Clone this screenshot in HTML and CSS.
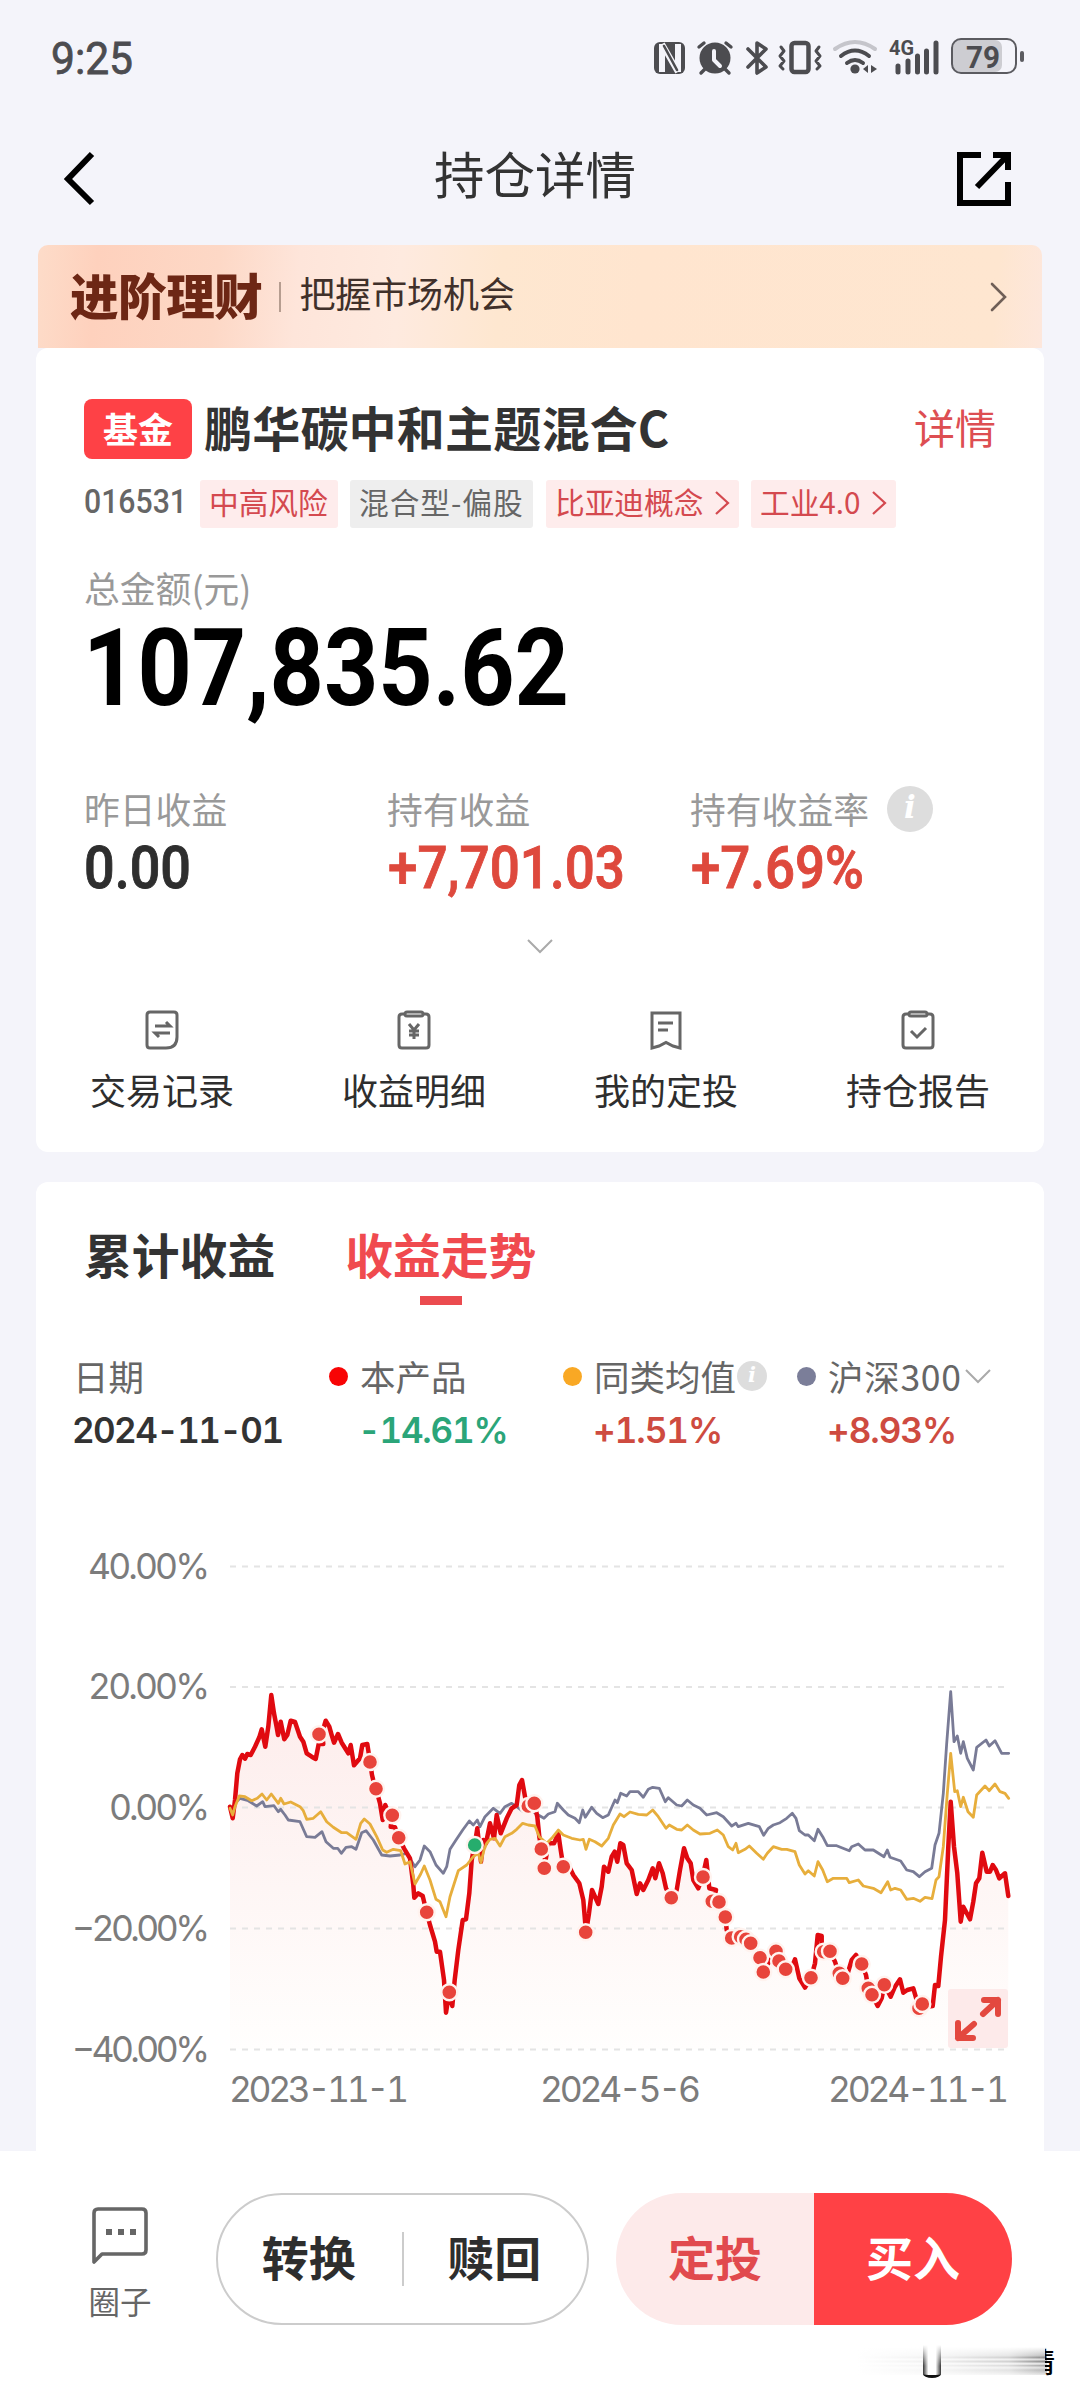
FILE: index.html
```html
<!DOCTYPE html>
<html lang="zh-CN">
<head>
<meta charset="utf-8">
<title>持仓详情</title>
<link rel="stylesheet" href="styles.css">
</head>
<body>
<header class="status">
  <svg class="clock" width="84" height="52"><text x="0" y="43" textLength="82" lengthAdjust="spacingAndGlyphs">9:25</text></svg>
  <svg class="status-icons" width="380" height="50" viewBox="650 30 380 50">
    <g fill="none" stroke="#4c4c50" stroke-width="3.4" stroke-linecap="round" stroke-linejoin="round">
      <rect x="654" y="42" width="31" height="32" rx="6" fill="#4c4c50" stroke="none"/>
      <path d="M662 44V72M678 44V72M662 44L678 72" stroke="#f4f4fa" stroke-width="6" stroke-linecap="butt"/>
      <path d="M664 46L677 70" stroke-width="2.6"/>
      <circle cx="715" cy="58" r="15.5" fill="#4c4c50" stroke="none"/>
      <path d="M699 47l5-4M731 47l-5-4M705 69l-4 4M725 69l4 4"/>
      <path d="M714 51v9l6 6" stroke="#f4f4fa" stroke-width="4"/>
      <path d="M748 49l18 18-9 6V43l9 6-18 18" stroke-width="3.6"/>
      <rect x="791.500" y="43" width="17" height="29" rx="3" stroke-width="4.500"/>
      <path d="M781 47l3 4-4 5 4 5-4 5 3 3M819 47l-3 4 4 5-4 5 4 5-3 3" stroke-width="3"/>
      <path d="M835 49q20-14 40 0" stroke="#c5c5cb" stroke-width="4"/>
      <path d="M841 56q14-11 28 0M847 63q8-6 16 0" stroke-width="4"/>
      <path d="M898 66v6M908 61v11M917.500 56v16M926.500 51v21M936 43v29" stroke-width="5"/>
    </g>
    <circle cx="855" cy="69" r="4.600" fill="#4c4c50"/>
    <path d="M868 65v8l-5-4zM871 65l6 4-6 4z" fill="#4c4c50"/>
    <text class="net" x="889" y="55" textLength="25" lengthAdjust="spacingAndGlyphs">4G</text>
    <rect x="953" y="40" width="49" height="32" rx="7" fill="#cdcdd2"/>
    <rect x="952" y="39" width="64" height="34" rx="9" fill="none" stroke="#5b5b60" stroke-width="2"/>
    <rect x="1020" y="51" width="4" height="11" rx="2" fill="#5b5b60"/>
    <text class="bat" x="966" y="68" textLength="34" lengthAdjust="spacingAndGlyphs">79</text>
  </svg>
</header>
<nav class="topbar">
  <svg width="32" height="56" viewBox="0 0 32 56"><path d="M28 3L4 28L28 52" fill="none" stroke="#000" stroke-width="6"/></svg>
  <h1>持仓详情</h1>
  <svg width="54" height="54" viewBox="0 0 54 54" fill="none" stroke="#000" stroke-width="6"><path d="M24 3H3V51H51V30M36 3H51V18M51 3L20 35"/></svg>
</nav>
<main>
  <section class="banner">
    <strong>进阶理财</strong><i></i><span>把握市场机会</span>
    <svg width="18" height="32" viewBox="0 0 18 32"><path d="M2 3L15 16L2 29" fill="none" stroke="#6f5f57" stroke-width="2.600" stroke-linecap="round"/></svg>
  </section>
  <section class="card holding">
    <div class="name-row"><b class="badge">基金</b><h2>鹏华碳中和主题混合C</h2><a>详情</a></div>
    <div class="tag-row">
      <svg class="code" width="104" height="38"><text x="0" y="27" textLength="103" lengthAdjust="spacingAndGlyphs">016531</text></svg>
      <span class="tag t1">中高风险</span><span class="tag t2">混合型-偏股</span>
      <span class="tag t3">比亚迪概念<svg width="14" height="24" viewBox="0 0 14 24"><path d="M1 1L13 12L1 23"/></svg></span>
      <span class="tag t4">工业4.0<svg width="14" height="24" viewBox="0 0 14 24"><path d="M1 1L13 12L1 23"/></svg></span>
    </div>
    <div class="total-label">总金额(元)</div>
    <svg class="total" width="500" height="100"><text x="0" y="83" textLength="486" lengthAdjust="spacingAndGlyphs">107,835.62</text></svg>
    <div class="stats">
      <div><p>昨日收益</p><svg width="240" height="62"><text class="dark" x="0" y="48" textLength="107" lengthAdjust="spacingAndGlyphs">0.00</text></svg></div>
      <div><p>持有收益</p><svg width="240" height="62"><text x="1" y="48" textLength="237" lengthAdjust="spacingAndGlyphs">+7,701.03</text></svg></div>
      <div><p>持有收益率<em class="info">i</em></p><svg width="240" height="62"><text x="1" y="48" textLength="173" lengthAdjust="spacingAndGlyphs">+7.69%</text></svg></div>
    </div>
    <div class="more"><svg width="28" height="18" viewBox="0 0 28 18"><path d="M2 3L14 15L26 3" fill="none" stroke="#aaa" stroke-width="2"/></svg></div>
    <div class="actions">
      <div><svg viewBox="0 0 40 44"><path d="M7 4H31Q34 4 34 7V29Q34 40 23 40H7Q4 40 4 37V7Q4 4 7 4Z"/><path d="M12 18H27L23 14M27 25H12L16 29"/></svg>交易记录</div>
      <div><svg viewBox="0 0 40 44"><path d="M10 6H7Q4 6 4 9V37Q4 40 7 40H31Q34 40 34 37V9Q34 6 31 6H28"/><rect x="10" y="4" width="18" height="4" rx="2"/><path d="M14 16L19 22L24 16M19 22V31M14 23H24M14 27H24"/></svg>收益明细</div>
      <div><svg viewBox="0 0 40 44"><path d="M5 5H33V40L26 38L19 34.500L12 38L5 40Z"/><path d="M11 15H26M11 22H21"/></svg>我的定投</div>
      <div><svg viewBox="0 0 40 44"><path d="M10 6H7Q4 6 4 9V37Q4 40 7 40H31Q34 40 34 37V9Q34 6 31 6H28"/><rect x="10" y="4" width="18" height="4" rx="2"/><path d="M12 23L18 29L27 20"/></svg>持仓报告</div>
    </div>
  </section>
  <section class="card trend">
    <div class="tabs"><b>累计收益</b><b class="active">收益走势</b></div>
    <div class="legend">
      <div class="c0"><p>日期</p><strong>2024-11-01</strong></div>
      <div class="c1"><p><i class="dot red"></i>本产品</p><strong class="down">-14.61%</strong></div>
      <div class="c2"><p><i class="dot gold"></i>同类均值<em class="info small">i</em></p><strong class="up">+1.51%</strong></div>
      <div class="c3"><p><i class="dot slate"></i>沪深300<svg width="28" height="18" viewBox="0 0 28 18"><path d="M2 3L14 15L26 3" fill="none" stroke="#aaa" stroke-width="2"/></svg></p><strong class="up">+8.93%</strong></div>
    </div>
    <svg class="chart" width="1008" height="576" viewBox="36 1540 1008 576">
      <defs><linearGradient id="fade" gradientUnits="userSpaceOnUse" x1="0" y1="1690" x2="0" y2="2049"><stop offset="0" stop-color="#fdeceb"/><stop offset=".55" stop-color="#fef6f5"/><stop offset="1" stop-color="#fffefd"/></linearGradient></defs>
      <path id="area" fill="url(#fade)"/>
      <g class="grid"><path d="M230 1566.500H1008M230 1687H1008M230 1807.500H1008M230 1928.500H1008M230 2049.500H1008"/></g>
      <path id="slate" class="line" stroke="#797b96" stroke-width="2.800"/>
      <path id="red" class="line" stroke="#e00a10" stroke-width="4.500"/>
      <path id="gold" class="line" stroke="#e7ae3c" stroke-width="2.800"/>
      <g id="marks"></g>
      <rect x="948" y="1989" width="60" height="59" rx="3" fill="#fdeaea"/>
      <path d="M984 2000H998V2014M998 2000L983 2014M958 2023V2038H973M958 2038L974 2024" fill="none" stroke="#e3483f" stroke-width="6" stroke-linejoin="round" stroke-linecap="round"/>
      <g class="axis">
        <text x="88" y="1579" textLength="122">40.00%</text><text x="88" y="1699" textLength="122">20.00%</text><text x="109" y="1820" textLength="101">0.00%</text><text x="72" y="1941" textLength="138">−20.00%</text><text x="72" y="2062" textLength="138">−40.00%</text>
        <text x="229" y="2102" textLength="180">2023-11-1</text><text x="540" y="2102" textLength="161">2024-5-6</text><text x="828" y="2102" textLength="181">2024-11-1</text>
      </g>
    </svg>
  </section>
</main>
<footer class="bottom">
  <div class="circle"><svg width="58" height="58" viewBox="0 0 58 58" fill="none" stroke="#666" stroke-width="3.600" stroke-linejoin="round"><path d="M3 56V7Q3 3 7 3H51Q55 3 55 7V44Q55 48 51 48H11Z"/><path d="M15 26H21M27 26H33M39 26H45" stroke-width="6"/></svg>圈子</div>
  <div class="pill outline"><span>转换</span><i></i><span>赎回</span></div>
  <div class="pill solid"><span>定投</span><span class="buy">买入</span></div>
  <div class="smear"><span class="streaks"></span><span class="hook"></span><span class="cut">情</span></div>
</footer>
<script src="chart.js"></script>
</body>
</html>
```
FILE: styles.css
```css
*{box-sizing:border-box}
body{margin:0;width:1080px;height:2400px;overflow:hidden;background:#f4f4fa;font-family:"Noto Sans CJK SC",sans-serif;color:#333}
h1,h2,p{margin:0;font-weight:400}
svg{display:block;flex:none;overflow:visible}
i,em{font-style:normal}
.status{height:110px;padding:30px 50px 0 51px;display:flex;justify-content:space-between}
.clock{font:400 45px Roboto,sans-serif;fill:#4c4c50;stroke:#4c4c50;stroke-width:.8px;margin-top:1px}
.net{font:700 21px Roboto,sans-serif;fill:#4c4c50}
.bat{font:700 31px Roboto,sans-serif;fill:#4c4c50}
.topbar{height:135px;padding:2px 69px 0 64px;display:flex;align-items:center;justify-content:space-between}
.topbar h1{font-size:50.500px;line-height:60px;margin-left:17px;margin-bottom:13px}
main{padding:0 36px}
.banner{height:103px;margin:0 2px;padding:0 34px 0 32px;border-radius:10px 10px 0 0;display:flex;align-items:center;background:linear-gradient(95deg,#fddcc9 0,#fed1bd 6%,#fdd8c6 18%,#fee5da 26%,#feeadf 36%,#fee7d0 46%,#ffe5cf 60%,#fee6d0 95%,#fde7dc 100%)}
.banner strong{font-size:48.500px;font-weight:900;letter-spacing:-.4px;color:#6d2715;line-height:60px;margin-bottom:6px;white-space:nowrap}
.banner i{width:2px;height:30px;background:#b69d90;margin:0 18px 0 17px}
.banner span{font-size:36px;line-height:48px;margin-bottom:9px;letter-spacing:-.1px;flex:1;color:#40302a}
.card{background:#fff;border-radius:12px}
.holding{height:804px;padding:51px 48px 0}
.name-row{display:flex;align-items:center;height:60px}
.badge{width:108px;height:60px;border-radius:8px;background:#fe4146;color:#fff;font-size:35px;line-height:58px;text-align:center}
.name-row h2{font-size:48px;font-weight:700;line-height:60px;margin:-6px 0 0 12px;letter-spacing:.2px;flex:1;white-space:nowrap}
.name-row a{color:#dd4e52;font-size:41px;line-height:60px;margin:-6px 0 0}
.tag-row{display:flex;height:48px;margin-top:21px}
.code{margin:6px 12px 0 0;font:500 34px Roboto,sans-serif;fill:#666}
.tag{height:48px;padding:0 10px 0 9px;font-size:29.700px;line-height:44px;padding-bottom:5px;border-radius:3px;background:#feecec;color:#d4494f;display:flex;align-items:center;justify-content:space-between;white-space:nowrap}
.tag svg{fill:none;stroke:#d4494f;stroke-width:2.200;margin-top:3px}
.t1{width:138px;margin-right:12px}.t2{width:183px;margin-right:13px;background:#eee;color:#666;letter-spacing:1px}.t3{width:193px;margin-right:12px}.t4{width:145px}
.total-label{font-size:35.800px;line-height:46px;margin-top:36px;color:#999}
.total{height:100px;margin:12px 0 0 -1px;font:700 107px Roboto,sans-serif;fill:#000}
.stats{display:grid;grid-template-columns:303px 303px 1fr;margin-top:64px}
.stats p{font-size:35.800px;line-height:44px;height:46px;padding-bottom:2px;color:#999;display:flex;align-items:center;white-space:nowrap}
.stats svg{margin-top:8px;font:500 60px Roboto,sans-serif;fill:#de493d;stroke:#de493d;stroke-width:.9px}
.stats .dark{fill:#2e2e2e;stroke:#2e2e2e}
.info{flex:none;width:46px;height:46px;border-radius:50%;background:#ddd;color:#fff;font:italic 700 31px/43px "DejaVu Serif",serif;text-align:center;margin:2px 0 0 18px}
.info.small{width:30px;height:30px;font-size:21px;line-height:28px;margin:0 0 0 1px}
.more{display:flex;justify-content:center;margin-top:35px}
.actions{display:grid;grid-template-columns:repeat(4,252px);margin:53px -48px 0}
.actions div{display:flex;flex-direction:column;align-items:center;font-size:36px;line-height:46px;color:#2e2e2e}
.actions svg{width:40px;height:44px;margin:0 0 14px 2px;fill:none;stroke:#666;stroke-width:3}
.trend{height:969px;margin-top:30px;padding-top:42px;border-radius:12px 12px 0 0}
.tabs{display:flex;gap:70px;padding-left:48px;height:82px;font-size:47.800px;line-height:60px}
.active{color:#f04a4f;display:flex;flex-direction:column;align-items:center}
.active::after{content:"";width:42px;height:9px;background:#eb4b4f;margin-top:12px}
.legend{display:grid;grid-template-columns:256px 234px 234px 1fr;padding:44px 0 0 37px}
.legend p{display:flex;align-items:center;font-size:35.500px;line-height:52px;height:52px;color:#666;white-space:nowrap}
.dot{width:19px;height:19px;border-radius:50%;margin:0 12px 0 0}
.c3 p{letter-spacing:.7px}
.c3 svg{margin-left:2px}
.red{background:#f80405}.gold{background:#f9a824}.slate{background:#7b7e99}
.legend strong{display:block;font:600 35px/50px Inter,sans-serif;font-feature-settings:"tnum";letter-spacing:-1px;margin:3px 0 0 30px;white-space:nowrap}
.legend .c0 strong{margin-left:-1px;letter-spacing:-1.600px}
.legend .c1 strong{margin-left:29px;letter-spacing:-1.200px}
.down{color:#2ba579}.up{color:#ce4b40}
.chart{margin-top:85px}
.grid path{fill:none;stroke:#e4e4e4;stroke-width:2;stroke-dasharray:6 6}
.line{fill:none;stroke-linejoin:round;stroke-linecap:round}
.axis{font:400 35.500px Inter,sans-serif;font-feature-settings:"tnum";fill:#7c7c7c}
.bottom{height:249px;background:#fff;display:flex;padding:42px 68px 0 88px;position:relative}
.circle{width:62px;margin:13px 65px 0 1px;display:flex;flex-direction:column;align-items:center;font-size:31.500px;line-height:42px;color:#666;white-space:nowrap}
.circle svg{margin-bottom:15px}
.pill{height:132px;border-radius:66px;display:flex;align-items:center;font-size:47px;font-weight:700}
.pill span{flex:1;text-align:center;line-height:125px}
.outline{width:373px;border:2px solid #ccc;margin-right:27px;color:#2e2e2e}
.outline span{line-height:122px;height:128px;padding-right:2px}
.outline i{width:2px;height:54px;background:#ccc}
.solid{width:396px;overflow:hidden;background:#fdeaea;color:#e14a4e}
.solid span{height:132px}
.solid .buy{background:#ff4145;color:#fff}
.smear{position:absolute;left:857px;top:194px;width:200px;height:36px}
.smear span{position:absolute}
.streaks{left:0;top:2px;width:190px;height:28px;background:linear-gradient(90deg,#fff 0,#ffffffe0 45%,#ffffffa8 80%,#ffffff20 100%),linear-gradient(#fff,#bbb 30%,#777 38%,#ddd 44%,#777 52%,#eee 60%,#999 66%,#ddd 74%,#aaa 82%,#e5e5e5)}
.hook{left:66px;top:0;width:18px;height:33px;border-radius:0 0 9px 9px/0 0 4px 4px;border-bottom:3px solid #111;background:linear-gradient(#fff,#fff0 70%),linear-gradient(90deg,#333,#fff 30%,#fff 70%,#333)}
.cut{right:2px;top:1px;width:10px;height:32px;overflow:hidden;direction:rtl;font-size:28px;line-height:30px;font-weight:500;color:#000}
```
FILE: chart.js
```js
// Each series is stored as tiles: [originX, originY, points], three units per pixel.
const series = {
  red: [
    [200,1640,"90,500 98,535 105,480 112,400 120,358 127,345 135,356 142,342 152,345 165,320 178,292 185,268 196,320 205,260 214,165 222,220 230,262 234,285 242,245 253,298 262,285 272,242 285,246 300,290 310,305 320,340 335,350 347,357 356,312 370,312 366,280 377,242 388,260 395,285 402,308 414,282 425,308 445,340 452,315 462,376 480,355 487,315 502,312 510,365 516,405 522,430 528,446 540,490 548,540 556,495 566,520 577,526 572,560 585,562 596,593 612,625 630,655 640,735 643,773 655,760 668,768 680,818 690,855 705,905 710,935 720,935 732,1020 738,1118 747,1060 757,1098 764,1020 775,930 788,840 798,838 808,760 815,660 824,615 832,565 843,665 850,600 858,610"],
    [480,1700,"30,370 42,415 50,345 62,400 80,355 95,325 110,315 118,255 126,240 135,290 145,320 163,310 172,350 178,410 184,445 195,475 193,505 205,430 222,430 235,400 242,450 250,500 270,505 280,525 298,550 310,600 318,697 327,640 336,570 355,612 365,560 372,500 385,515 395,470 404,455 412,485 421,430 430,435 440,490 455,510 470,582 480,550 490,570 505,540 518,505 526,535 537,490 548,520 558,565 574,593 590,570 600,510 612,445 622,475 632,490 640,540 655,565 668,530 679,480 688,565 708,570 700,605 717,606 736,650 740,690 755,715 790,705 812,730 840,773 850,816 885,755 895,785 917,806"],
    [740,1660,"150,935 165,898 178,955 195,983 213,953 225,910 233,825 245,828 245,875 270,874 285,905 295,935 308,955 320,950 335,900 348,885 365,912 378,945 385,985 396,1004 413,1038 425,1015 433,974 452,1010 465,980 480,958 490,998 502,990 520,985 530,1020 537,1055 547,1032 560,1040 578,1038 585,975 595,978 603,890 615,780 625,560 632,425 642,560 652,640 662,785 670,740 690,778 700,725 708,670 718,655 727,578 740,635 750,635 758,615 768,630 778,655 795,640 805,708"]
  ],
  gold: [
    [200,1640,"90,505 98,525 105,500 118,468 135,470 155,482 172,475 186,462 200,480 214,462 235,490 242,475 252,492 272,486 300,500 310,512 320,538 340,535 362,515 380,545 400,562 425,578 440,578 468,598 482,550 493,537 510,552 530,590 548,630 560,637 580,628 602,632 615,672 630,665 645,732 662,702 673,678 690,720 708,778 720,785 738,830 750,770 775,692 800,675 820,650 835,640 843,668 852,630"],
    [480,1700,"20,430 30,418 45,415 60,438 75,410 95,400 110,388 128,370 145,375 165,378 178,410 200,430 215,415 235,390 250,405 275,415 300,420 310,418 318,448 328,418 345,425 365,438 385,415 400,375 420,342 432,350 450,336 475,343 500,345 518,330 535,350 558,385 568,375 590,388 605,390 622,375 640,390 660,402 690,400 712,390 730,405 745,440 758,450 768,430 775,458 795,448 808,438 830,460 850,478 862,460 880,440"],
    [740,1660,"125,568 140,568 165,575 178,615 195,642 205,632 223,648 234,605 248,630 262,665 280,655 320,655 328,668 355,660 370,678 400,685 423,698 443,665 452,690 465,685 482,690 500,718 520,715 540,724 555,712 576,716 588,660 597,650 610,560 622,400 632,280 644,395 652,392 662,440 670,412 684,455 700,472 710,405 735,378 748,392 765,372 780,395 795,400 806,415"]
  ],
  slate: [
    [200,1640,"105,490 120,475 145,482 170,498 188,485 195,500 222,497 235,515 242,508 255,525 265,540 300,545 320,590 345,592 366,575 378,605 400,625 413,625 424,640 438,622 455,620 468,628 485,578 498,572 520,600 545,645 570,648 600,645 620,640 645,680 660,660 673,618 690,635 708,675 730,700 740,680 750,628 768,600 788,570 808,543 820,555 832,540 840,560 855,530"],
    [480,1700,"40,325 60,340 75,320 95,310 110,320 130,335 150,330 175,345 192,355 205,342 225,335 232,310 250,330 265,345 285,355 298,368 308,330 316,352 335,322 350,340 368,353 385,345 405,300 412,308 422,280 440,288 450,275 475,275 490,292 505,268 518,262 538,265 556,305 565,293 590,315 605,318 622,300 640,315 660,325 680,345 710,338 730,350 755,378 768,370 775,380 805,370 838,380 851,406 865,385 880,375"],
    [740,1660,"120,488 140,475 157,460 168,475 178,512 195,525 205,525 223,542 234,508 248,530 262,557 290,557 328,572 335,560 355,552 375,570 400,570 432,590 442,570 450,592 482,603 500,630 520,635 538,650 555,635 575,625 585,555 597,520 610,400 620,250 632,95 642,245 652,228 662,280 670,245 682,295 700,330 710,262 738,240 748,258 765,242 785,280 806,280"]
  ]
};
const buys = [
  [200,1640,"357,283 510,366 528,446 577,526 596,593 680,817 748,1057"],
  [480,1700,"145,318 163,310 184,447 193,505 250,500 317,697 574,593 669,531 697,604 717,606 736,651 755,714 782,710 798,718 812,730 840,773 850,816"],
  [740,1660,"108,874 117,903 137,928 213,953 251,875 270,874 298,940 308,955 365,912 385,985 396,1004 433,974 537,1045 547,1032"]
];
const sells = [[200,1640,"824,615"]];
const decode = tiles => tiles.flatMap(([ox, oy, pts]) => pts.split(" ").map(p => {
  const [x, y] = p.split(",").map(Number);
  return [(ox + x / 3).toFixed(1), (oy + y / 3).toFixed(1)];
}));
for (const id in series) {
  const d = "M" + decode(series[id]).map(p => p.join(" ")).join("L");
  document.getElementById(id).setAttribute("d", d);
  if (id === "red") document.getElementById("area").setAttribute("d", d + "V2049H230Z");
}
const dots = (tiles, fill) => decode(tiles).map(([x, y]) => `<circle cx="${x}" cy="${y}" r="8" fill="${fill}" stroke="#fff3ef" stroke-width="2.400"/>`).join("");
document.getElementById("marks").innerHTML = dots(buys, "#e8443b") + dots(sells, "#26ad6d");
```
